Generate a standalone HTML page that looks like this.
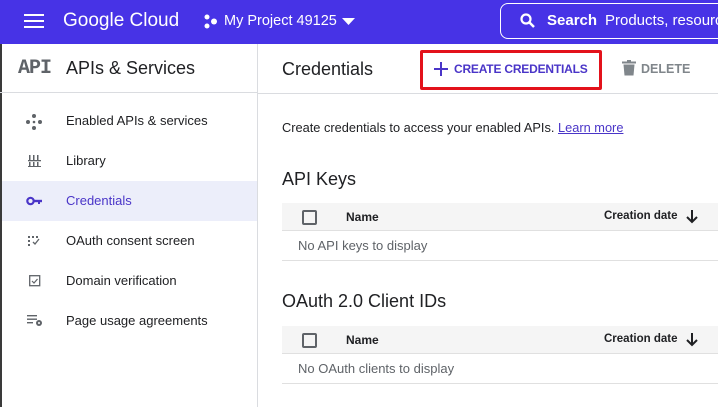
<!DOCTYPE html>
<html><head><style>
*{margin:0;padding:0;box-sizing:border-box}
body{width:718px;height:407px;overflow:hidden;background:#fff;font-family:"Liberation Sans",sans-serif;color:#202124;position:relative}
.a{position:absolute;white-space:nowrap}
.hdr{position:absolute;left:0;top:0;width:718px;height:44px;background:#4733e6}
.side{position:absolute;left:0;top:44px;width:258px;height:363px;border-right:1px solid #dadce0;border-left:2px solid #3a3a3a}
.item{position:absolute;left:2px;width:255px;height:40px;font-size:13px;line-height:40px}
.item span{position:absolute;left:64px}
.th{position:absolute;left:282px;width:436px;height:28px;background:#f5f5f5;border-bottom:1px solid #e0e0e0}
.cb{position:absolute;left:20px;top:7px;width:15px;height:15px;border:2px solid #5f6368;border-radius:2px}
.hr{position:absolute;left:282px;width:436px;height:1px;background:#e0e0e0}
</style></head><body>
<div class="hdr">
 <svg class="a" style="left:24px;top:14px" width="20" height="14"><rect y="0" width="20" height="2" fill="#fff"/><rect y="6" width="20" height="2" fill="#fff"/><rect y="12" width="20" height="2" fill="#fff"/></svg>
 <div class="a" style="left:63px;top:10px;font-size:19px;color:#fff">Google Cloud</div>
 <svg class="a" style="left:203px;top:14px" width="16" height="16"><circle cx="4" cy="3" r="2.5" fill="#fff"/><circle cx="4" cy="12" r="2.5" fill="#fff"/><circle cx="11" cy="7.5" r="3" fill="#fff"/></svg>
 <div class="a" style="left:224px;top:13px;font-size:14.5px;color:#fff">My Project 49125</div>
 <svg class="a" style="left:342px;top:18px" width="13" height="8"><path d="M0 0L13 0L6.5 7Z" fill="#fff"/></svg>
 <div class="a" style="left:500px;top:3px;width:240px;height:36px;border:1px solid #fff;border-radius:8px"></div>
 <svg class="a" style="left:519px;top:12px" width="18" height="18"><circle cx="7" cy="7" r="4.5" stroke="#fff" stroke-width="2.2" fill="none"/><path d="M10.5 10.5L15 15" stroke="#fff" stroke-width="2.5"/></svg>
 <div class="a" style="left:547px;top:12px;font-size:15px;color:#fff;font-weight:bold">Search</div>
 <div class="a" style="left:605px;top:12px;font-size:15px;color:#fff">Products, resources</div>
</div>
<div class="side">
 <div class="a" style="left:16px;top:13px;font-family:'Liberation Mono',monospace;font-size:20px;font-weight:bold;color:#5f6368;letter-spacing:-1px">API</div>
 <div class="a" style="left:64px;top:14px;font-size:18px">APIs &amp; Services</div>
 <div class="a" style="left:-2px;top:48px;width:257px;height:1px;background:#dadce0"></div>
</div>
<div class="item" style="top:101px"><svg class="a" style="left:24px;top:13px" width="16" height="16"><g fill="#5f6368"><circle cx="8" cy="2" r="2"/><circle cx="8" cy="14" r="2"/><circle cx="2" cy="8" r="2"/><circle cx="14" cy="8" r="2"/><circle cx="8" cy="8" r="1.3"/></g></svg><span>Enabled APIs &amp; services</span></div>
<div class="item" style="top:141px"><svg class="a" style="left:26px;top:14px" width="14" height="12"><g fill="#5f6368"><rect x="1" y="0" width="1.5" height="5"/><rect x="5" y="0" width="1.5" height="5"/><rect x="9" y="0" width="1.5" height="5"/><rect x="0" y="5" width="13" height="1.3"/><rect x="1" y="7" width="1.5" height="5"/><rect x="5" y="7" width="1.5" height="5"/><rect x="9" y="7" width="1.5" height="5"/><rect x="0" y="11" width="13" height="1.3"/></g></svg><span>Library</span></div>
<div class="item" style="top:181px;background:#eceefa;color:#4a35c8"><svg class="a" style="left:24px;top:14px" width="18" height="12"><circle cx="4.5" cy="6" r="3.2" stroke="#4a35c8" stroke-width="2.2" fill="none"/><rect x="7.5" y="4.8" width="8.5" height="2.4" fill="#4a35c8"/><rect x="12" y="6" width="2" height="3" fill="#4a35c8"/></svg><span>Credentials</span></div>
<div class="item" style="top:221px"><svg class="a" style="left:26px;top:15px" width="14" height="12" fill="#5f6368"><rect x="0" y="0" width="2" height="2"/><rect x="4" y="0" width="2" height="2"/><rect x="8" y="0" width="2" height="2"/><rect x="0" y="4" width="2" height="2"/><rect x="0" y="8" width="2" height="2"/><path d="M5 6l2 2 4-5" stroke="#5f6368" stroke-width="1.3" fill="none"/></svg><span>OAuth consent screen</span></div>
<div class="item" style="top:261px"><svg class="a" style="left:27px;top:14px" width="12" height="12"><rect x="0.7" y="0.7" width="10" height="10" stroke="#5f6368" stroke-width="1.3" fill="none"/><path d="M3 6l2 2 3.5-4" stroke="#5f6368" stroke-width="1.2" fill="none"/></svg><span>Domain verification</span></div>
<div class="item" style="top:301px"><svg class="a" style="left:25px;top:14px" width="18" height="12" fill="#5f6368"><rect x="0" y="0" width="10" height="1.4"/><rect x="0" y="3.5" width="10" height="1.4"/><rect x="0" y="7" width="6" height="1.4"/><circle cx="12" cy="8" r="3"/><circle cx="12" cy="8" r="1" fill="#fff"/></svg><span>Page usage agreements</span></div>

<div class="a" style="left:282px;top:59px;font-size:18px">Credentials</div>
<div class="a" style="left:420px;top:50px;width:182px;height:40px;border:3px solid #e3121b;border-radius:2px"></div>
<svg class="a" style="left:434px;top:62px" width="14" height="14"><path d="M7 0v14M0 7h14" stroke="#4a35c8" stroke-width="2"/></svg>
<div class="a" style="left:454px;top:62px;font-size:12px;font-weight:bold;color:#4a35c8;letter-spacing:-0.2px">CREATE CREDENTIALS</div>
<svg class="a" style="left:622px;top:60px" width="14" height="16" fill="#80868b"><rect x="0" y="1.5" width="14" height="2"/><rect x="5" y="0" width="4" height="2"/><path d="M1.5 4.5h11l-1 11h-9z"/></svg>
<div class="a" style="left:641px;top:62px;font-size:12.5px;font-weight:bold;color:#80868b">DELETE</div>
<div class="a" style="left:258px;top:93px;width:460px;height:1px;background:#dadce0"></div>

<div class="a" style="left:282px;top:120px;font-size:12.8px">Create credentials to access your enabled APIs. <span style="color:#4a35c8;text-decoration:underline">Learn more</span></div>
<div class="a" style="left:282px;top:169px;font-size:18px">API Keys</div>
<div class="th" style="top:203px"><div class="cb"></div><div class="a" style="left:64px;top:7px;font-size:12px;font-weight:bold">Name</div><div class="a" style="left:322px;top:7px;font-size:11.5px;font-weight:bold">Creation date</div><svg class="a" style="left:404px;top:7px" width="12" height="14"><path d="M6 0v12M1 7l5 5 5-5" stroke="#202124" stroke-width="2" fill="none"/></svg></div>
<div class="a" style="left:298px;top:238px;font-size:13px;color:#5f6368">No API keys to display</div>
<div class="hr" style="top:260px"></div>
<div class="a" style="left:282px;top:291px;font-size:18px">OAuth 2.0 Client IDs</div>
<div class="th" style="top:326px"><div class="cb"></div><div class="a" style="left:64px;top:7px;font-size:12px;font-weight:bold">Name</div><div class="a" style="left:322px;top:7px;font-size:11.5px;font-weight:bold">Creation date</div><svg class="a" style="left:404px;top:7px" width="12" height="14"><path d="M6 0v12M1 7l5 5 5-5" stroke="#202124" stroke-width="2" fill="none"/></svg></div>
<div class="a" style="left:298px;top:361px;font-size:13px;color:#5f6368">No OAuth clients to display</div>
<div class="hr" style="top:383px"></div>
</body></html>
